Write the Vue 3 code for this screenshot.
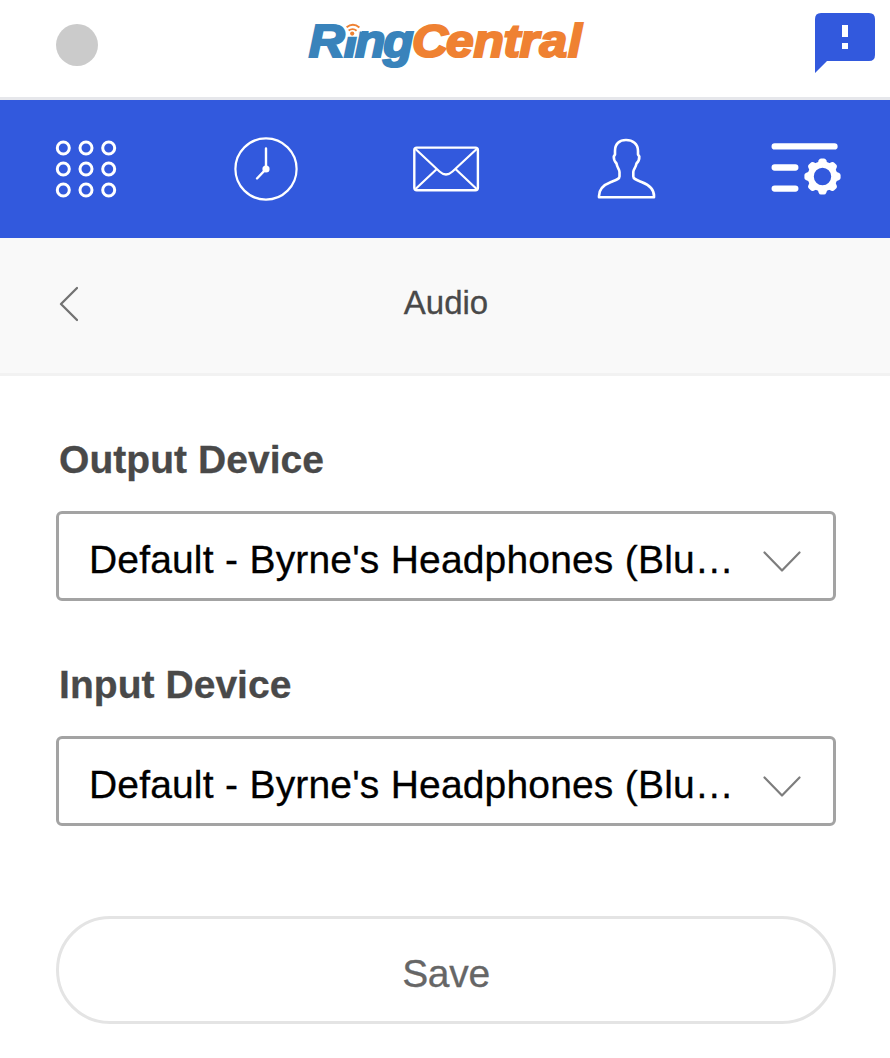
<script setup>
const dots = [12.3, 35, 57.7].flatMap((x) => [14, 35, 56].map((y) => ({ x, y })))
const teeth = [0, 45, 90, 135, 180, 225, 270, 315]
const devices = [
  { label: 'Output Device', value: "Default - Byrne's Headphones (Blu…" },
  { label: 'Input Device', value: "Default - Byrne's Headphones (Blu…" },
]
</script>

<template>
  <div class="app">
    <header class="top">
      <span class="presence"></span>
      <svg class="logo" width="290" height="60" viewBox="300 12 290 60">
        <text class="word blue" transform="scale(1.08 1)" x="285.8 318.6 328.8 354.8" y="57.5">Ring</text>
        <text class="word orange" transform="scale(1.08 1)" x="381.5 413 438.4 466.3 481 499.5 526" y="57.5">Central</text>
        <path d="M347.5 20H362V31.4H358.5V36.8H346.5Z" fill="#fff" />
        <circle cx="352.2" cy="33.6" r="2.1" fill="#ef8132" />
        <path d="M348.6 30.6Q352.8 27.6 356.6 30.8M346.6 27.2Q353 22 359.4 27.4" fill="none" stroke="#ef8132" stroke-width="1.9" />
      </svg>
      <svg class="feedback" width="60" height="60" viewBox="0 0 60 60">
        <path d="M6 0H54Q60 0 60 6V42Q60 48 54 48H12L0 60V6Q0 0 6 0Z" fill="#3259dd" />
        <path d="M27 12h6v12h-6zM27 30h6v6h-6z" fill="#fff" />
      </svg>
    </header>

    <nav class="tabs">
      <svg width="70" height="70" viewBox="0 0 70 70">
        <circle v-for="(d, i) in dots" :key="i" :cx="d.x" :cy="d.y" r="6" stroke-width="3" />
      </svg>
      <svg width="70" height="70" viewBox="0 0 70 70">
        <circle cx="35" cy="35" r="30.6" stroke-width="2.2" />
        <path d="M35 14.5V35L26 44.5" stroke-width="2.4" stroke-linecap="round" />
        <circle cx="35" cy="35" r="3.6" fill="#fff" stroke="none" />
      </svg>
      <svg width="70" height="70" viewBox="0 0 70 70">
        <rect x="3.3" y="13.6" width="63.6" height="42.6" rx="2.5" stroke-width="2.4" />
        <path d="M4.5 15L28.5 37.5Q35 43.5 41.5 37.5L65.7 15M4.5 55L25.3 35.5M65.7 55L45 35.5" stroke-width="2.2" />
      </svg>
      <svg width="70" height="70" viewBox="0 0 70 70">
        <path d="M8 63.2V62C8 55 13.5 50.5 20 48C25 46 28.5 45 28.5 42.5V38C28.5 35.5 26.3 34 25.5 29.5C23.6 27.5 22.5 25.5 22.8 22.5L24 20.5V17C24 9.5 28.5 6 35 6S47 9.5 47 17V20.5L48.3 22.5C48.5 25.5 47.5 27.5 45.5 29.5C44.7 34 42.3 35.5 42.3 38V42.5C42.3 45 45.5 46 50.5 48C57 50.5 63 55 63 62V63.2Z" stroke-width="2.6" stroke-linejoin="round" />
      </svg>
      <svg width="70" height="70" viewBox="0 0 70 70">
        <path d="M3.7 12.4H63.5M3.7 33.5H24.3M3.7 54.6H24.3" stroke-width="6.3" stroke-linecap="round" />
        <circle cx="51.5" cy="42.5" r="11.8" stroke-width="6.2" />
        <path v-for="a in teeth" :key="a" d="M46.6 29.5L47.7 26.3Q48.4 24.4 50 24.4H53Q54.6 24.4 55.3 26.3L56.4 29.5Z" fill="#fff" stroke="none" :transform="`rotate(${a} 51.5 42.5)`" />
      </svg>
    </nav>

    <div class="title-bar">
      <svg class="back" width="22" height="36" viewBox="0 0 22 36">
        <path d="M21 2L5 18L21 34" fill="none" stroke="#727272" stroke-width="2.3" stroke-linecap="round" stroke-linejoin="round" />
      </svg>
      <h1>Audio</h1>
    </div>

    <main>
      <section v-for="d in devices" :key="d.label" class="field">
        <h2>{{ d.label }}</h2>
        <div class="select">
          <span class="value">{{ d.value }}</span>
          <svg class="chevron" width="38" height="22" viewBox="0 0 38 22">
            <path d="M1.5 1.5L19 19.5L36.5 1.5" fill="none" stroke="#7d7d7d" stroke-width="2.2" stroke-linecap="round" stroke-linejoin="round" />
          </svg>
        </div>
      </section>
      <button class="save">Save</button>
    </main>
  </div>
</template>

<style>
body { margin: 0; background: #fff; }
</style>

<style scoped>
* { box-sizing: border-box; }
.app { width: 890px; height: 1058px; overflow: hidden; background: #fff; font-family: "Liberation Sans", Arial, sans-serif; }
.top { display: flex; align-items: flex-start; justify-content: space-between; height: 100px; padding: 12px 15px 0 56px; border-bottom: 3px solid #e6e7eb; }
.presence { width: 42px; height: 42px; margin: 12px 0 0; border-radius: 50%; background: #cbcbcb; }
.logo { margin-left: -23px; }
.word { font: italic bold 46px "Liberation Sans", Arial, sans-serif; stroke-width: 2.2px; }
.blue { fill: #3983bb; stroke: #3983bb; }
.orange { fill: #ef8132; stroke: #ef8132; }
.feedback { margin-top: 1px; }
.tabs { display: flex; justify-content: space-between; align-items: center; height: 138px; padding: 0 49px 0 51px; background: #3259dd; }
.tabs svg { fill: none; stroke: #fff; }
.title-bar { display: flex; align-items: center; height: 138px; padding: 0 54px 0 56px; background: #f9f9f9; border-bottom: 3px solid #f2f2f2; }
.back { margin-bottom: 4px; }
h1 { flex: 1; margin: 0 22px 6px 0; text-align: center; color: #494949; font-size: 33px; line-height: 40px; font-weight: 400; -webkit-text-stroke: 0.3px; }
main { padding: 60px 54px 0 56px; }
.field { height: 225px; }
h2 { margin: 0 0 27px 3px; height: 48px; line-height: 48px; font-size: 39px; letter-spacing: 0.05px; color: #494949; -webkit-text-stroke: 0.3px; }
.select { display: flex; align-items: center; justify-content: space-between; height: 90px; padding: 8px 32px 0 30px; border: 3px solid #a3a3a3; border-radius: 6px; }
.value { white-space: nowrap; font-size: 39px; letter-spacing: 0.15px; word-spacing: 0.4px; color: #000; -webkit-text-stroke: 0.3px; }
.chevron { margin-top: 4px; }
.save { display: block; width: 780px; height: 108px; margin-top: 30px; padding: 8px 0 0; border: 3px solid #e4e4e4; border-radius: 54px; background: #fff; color: #666; font: 39px "Liberation Sans", Arial, sans-serif; letter-spacing: -0.3px; -webkit-text-stroke: 0.3px; }
</style>
